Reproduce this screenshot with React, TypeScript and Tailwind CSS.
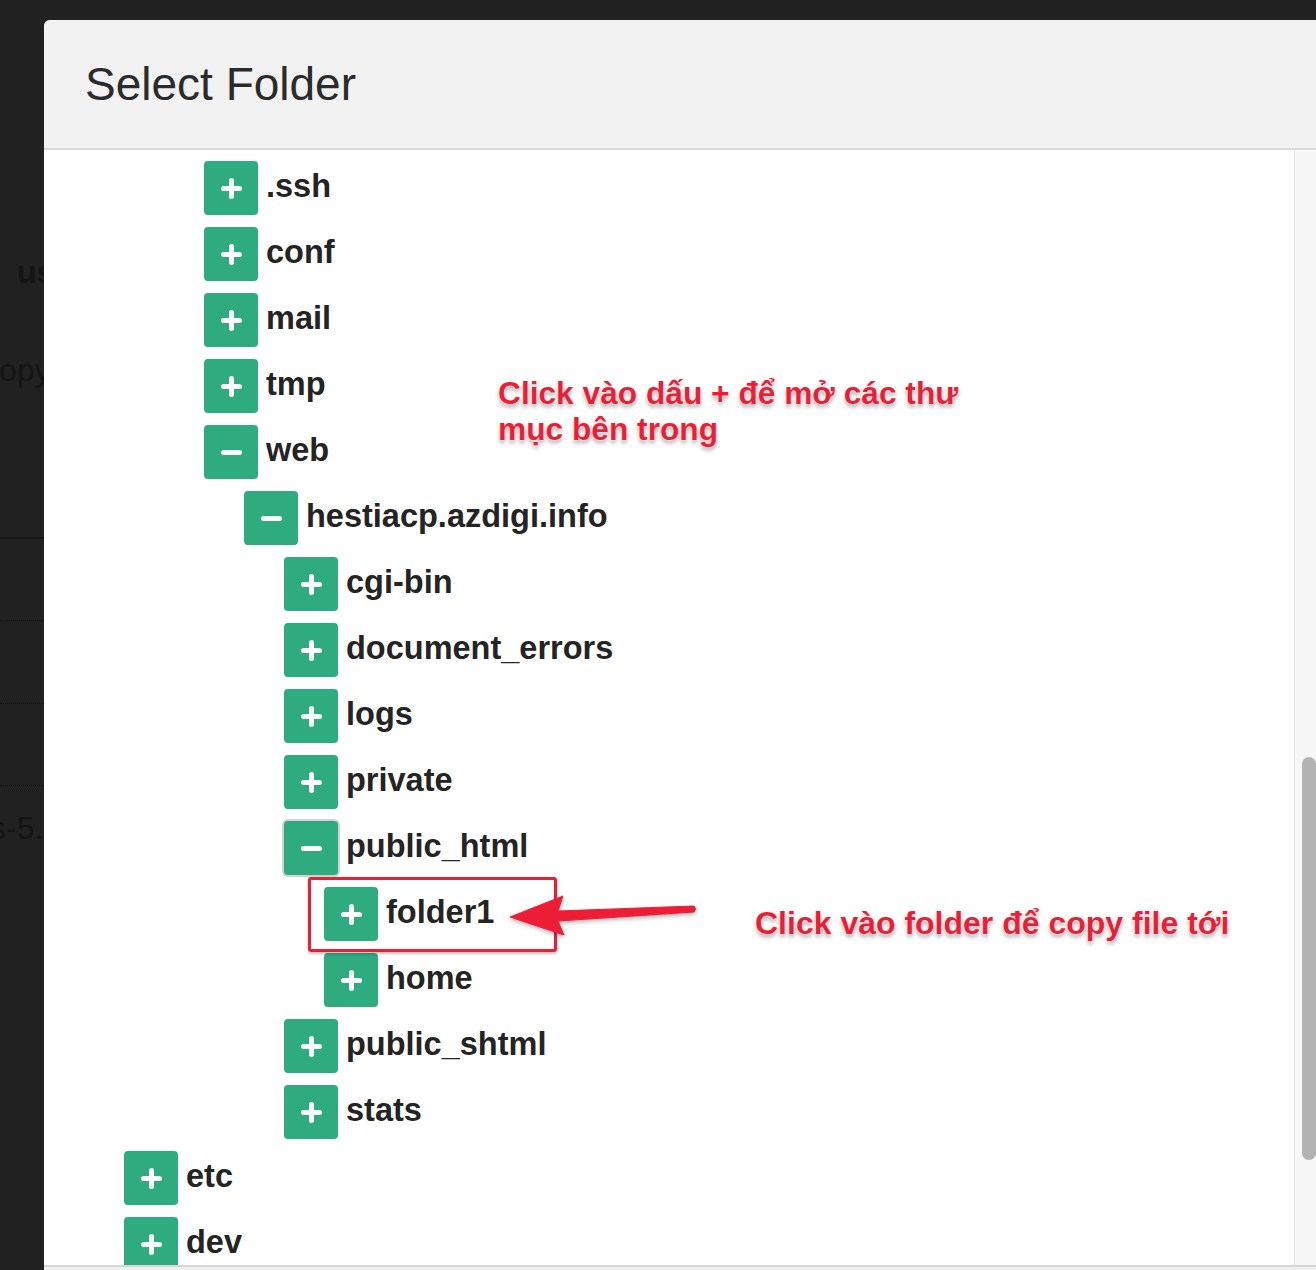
type Row = { name: string; depth: number; open?: boolean; focused?: boolean };

// the tree is scrolled, so the user folder (depth 1) sits above the view
const rows: Row[] = [
  { name: '.ssh', depth: 2 },
  { name: 'conf', depth: 2 },
  { name: 'mail', depth: 2 },
  { name: 'tmp', depth: 2 },
  { name: 'web', depth: 2, open: true },
  { name: 'hestiacp.azdigi.info', depth: 3, open: true },
  { name: 'cgi-bin', depth: 4 },
  { name: 'document_errors', depth: 4 },
  { name: 'logs', depth: 4 },
  { name: 'private', depth: 4 },
  { name: 'public_html', depth: 4, open: true, focused: true },
  { name: 'folder1', depth: 5 },
  { name: 'home', depth: 5 },
  { name: 'public_shtml', depth: 4 },
  { name: 'stats', depth: 4 },
  { name: 'etc', depth: 0 },
  { name: 'dev', depth: 0 },
];

const indent: Record<number, string> = {
  0: 'pl-[80px]',
  1: 'pl-[120px]',
  2: 'pl-[160px]',
  3: 'pl-[200px]',
  4: 'pl-[240px]',
  5: 'pl-[280px]',
};

function Toggle({ open, focused }: { open?: boolean; focused?: boolean }) {
  return (
    <span
      className={`flex h-[54px] w-[54px] shrink-0 items-center justify-center rounded-[4px] bg-[#2eac80] ${
        focused ? 'ring-2 ring-[#d2d2d2]' : ''
      }`}
    >
      <svg width="21" height="21" viewBox="0 0 21 21">
        <path
          d={open ? 'M2.5 10.5h16' : 'M10.5 2.5v16M2.5 10.5h16'}
          stroke="#fff"
          strokeWidth="5"
          strokeLinecap="round"
        />
      </svg>
    </span>
  );
}

function Backdrop() {
  // the page behind the dialog, only a thin strip of it shows
  return (
    <div className="flex w-[60px] flex-col text-[#151515]">
      <div className="ml-[17px] mt-[252px] whitespace-nowrap text-[32px] font-bold leading-[40px]">us</div>
      <div className="-ml-[17px] mt-[58px] whitespace-nowrap text-[32px] leading-[40px]">copy</div>
      <div className="mt-[147px] h-[2px] bg-[#161616]" />
      <div className="mt-[81px] border-t border-dotted border-[#111]" />
      <div className="mt-[82px] border-t border-dotted border-[#111]" />
      <div className="mt-[81px] border-t border-dotted border-[#111]" />
      <div className="-ml-[10px] mt-[22px] whitespace-nowrap text-[32px] leading-[40px]">s-5.1</div>
    </div>
  );
}

function Annotations() {
  const shadow =
    '[text-shadow:0_0_2px_#fff,0_0_1px_#fff,0_3px_4px_rgba(0,0,0,0.35)]';
  return (
    <div className="pointer-events-none absolute inset-0">
      <div
        className={`absolute left-[498px] top-[375px] whitespace-nowrap text-[31.7px] font-bold leading-[36px] text-[#ee1d36] ${shadow}`}
      >
        Click vào dấu + để mở các thư
        <br />
        mục bên trong
      </div>

      <div className="absolute left-[308px] top-[877px] h-[75px] w-[249px] rounded-[3px] border-[3px] border-[#ee1d36] shadow-[0_2px_3px_rgba(0,0,0,0.25)]" />

      <svg
        className="absolute left-[500px] top-[890px] drop-shadow-[0_2px_2px_rgba(0,0,0,0.3)]"
        width="200"
        height="52"
        viewBox="0 0 200 52"
      >
        <path
          d="M10 27 L63 6 L58 21 L194 16 Q197 19 194 22 L58 31 L64 45 Z"
          fill="#ee1d36"
          strokeLinejoin="round"
          stroke="#ee1d36"
          strokeWidth="1"
        />
      </svg>

      <div
        className={`absolute left-[755px] top-[906px] whitespace-nowrap text-[32px] font-bold leading-[35px] text-[#ee1d36] ${shadow}`}
      >
        Click vào folder để copy file tới
      </div>
    </div>
  );
}

export default function App() {
  return (
    <div className="relative h-[1270px] w-full overflow-hidden bg-[#212121] font-['Liberation_Sans',Arial,sans-serif]">
      <Backdrop />

      {/* Dialog */}
      <div className="absolute bottom-0 left-[44px] right-0 top-[20px] flex flex-col overflow-hidden rounded-tl-[6px] bg-white">
        <div className="flex h-[130px] shrink-0 items-center border-b-2 border-[#d9d9d9] bg-[#f2f2f2] pl-[41px]">
          <h2 className="text-[46px] font-normal leading-none text-[#2b2b2b]">Select Folder</h2>
        </div>

        <div className="flex min-h-0 flex-1">
          <div className="min-w-0 flex-1 overflow-hidden pt-[11px]">
            <ul className="flex flex-col gap-[12px]">
              {rows.map((row) => (
                <li key={row.name} className={`flex items-center ${indent[row.depth]}`}>
                  <Toggle open={row.open} focused={row.focused} />
                  <span className="mb-[4px] ml-[8px] whitespace-nowrap text-[32.5px] font-bold text-[#242424]">
                    {row.name}
                  </span>
                </li>
              ))}
            </ul>
          </div>

          {/* scrollbar */}
          <div className="w-[22px] shrink-0 border-l border-[#e3e3e3] bg-[#f7f7f7] pl-[7px] pt-[607px]">
            <div className="h-[403px] w-[14px] rounded-full bg-[#b3b3b3]" />
          </div>
        </div>

        <div className="h-[5px] shrink-0 border-t-2 border-[#d6d6d6] bg-[#f0f0f0]" />
      </div>

      <Annotations />
    </div>
  );
}
